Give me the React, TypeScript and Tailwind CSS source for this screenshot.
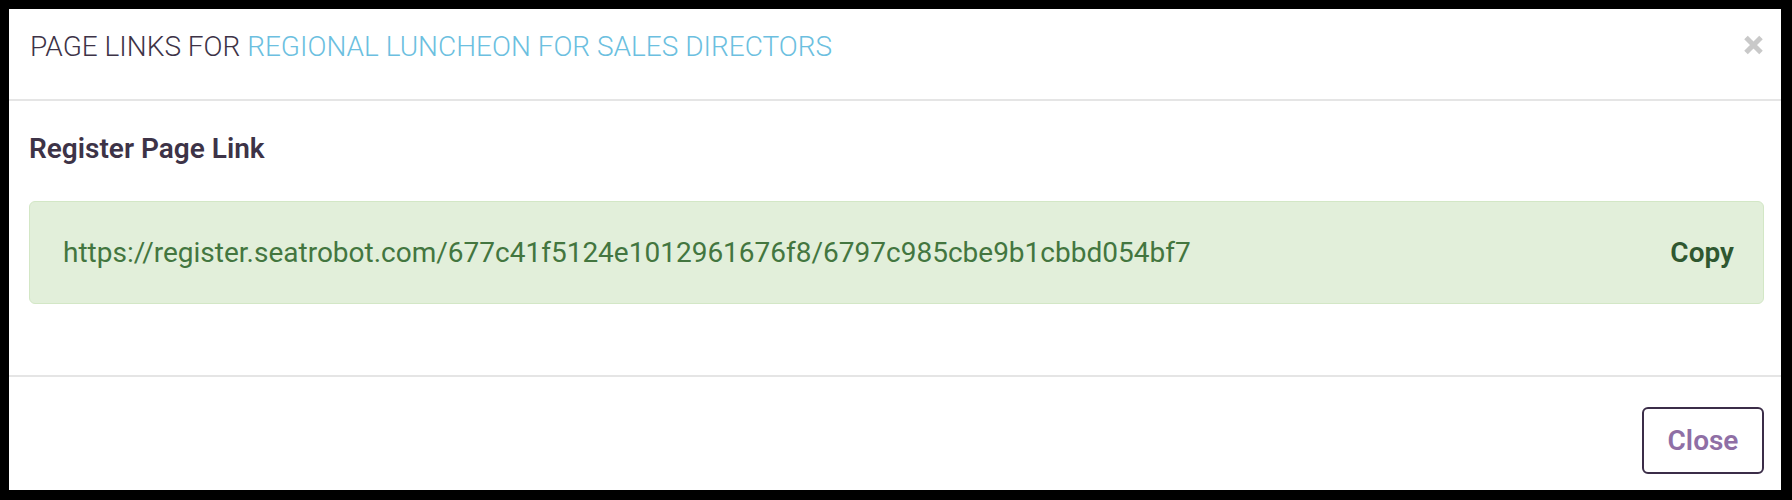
import React from "react";

const pageUrl = "https://register.seatrobot.com/677c41f5124e1012961676f8/6797c985cbe9b1cbbd054bf7";

const CloseIcon = () => (
  <svg width="21" height="20" viewBox="0 0 21 20" aria-hidden="true">
    <path d="M3 2.5 L18 17.5 M18 2.5 L3 17.5" stroke="#c9c9c9" strokeWidth="5" strokeLinecap="butt" />
  </svg>
);

const PageLinksModal = () => {
  return (
    <div className="w-[1772px] h-[481px] bg-white flex flex-col">
      {/* header */}
      <div className="h-[92px] flex justify-between items-start pt-[24px] pl-[21px] pr-[17px] border-b-2 border-[#e5e5e5]">
        <h3 className="text-[28px] leading-[28px] font-light text-[#3d3347]">
          PAGE LINKS FOR <span className="text-[#6cbfe0]">REGIONAL LUNCHEON FOR SALES DIRECTORS</span>
        </h3>
        <button className="mt-[2px]">
          <CloseIcon />
        </button>
      </div>

      {/* body */}
      <div className="h-[276px] pt-[34px] pl-[20px] pr-[17px] border-b-2 border-[#e5e5e5]">
        <h4 className="text-[28px] leading-[28px] font-semibold text-[#3d3347]">Register Page Link</h4>
        <div className="mt-[38px] h-[103px] flex items-center justify-between pl-[33px] pr-[29px] bg-[#e2efda] border border-[#d3e7c6] rounded-[6px]">
          <span className="text-[28px] text-[#43763f]">{pageUrl}</span>
          <button className="text-[28px] font-semibold text-[#2f5730]">Copy</button>
        </div>
      </div>

      {/* footer */}
      <div className="flex-1 flex justify-end items-start pt-[30px] pr-[17px]">
        <button className="w-[122px] h-[67px] border-2 border-[#3b2d48] rounded-[6px] text-[28px] font-semibold text-[#8f6fa5]">
          Close
        </button>
      </div>
    </div>
  );
};

export default function App() {
  return (
    <div className="w-[1792px] h-[500px] bg-black pt-[9px] pl-[9px] font-['Roboto',sans-serif]">
      <PageLinksModal />
    </div>
  );
}
